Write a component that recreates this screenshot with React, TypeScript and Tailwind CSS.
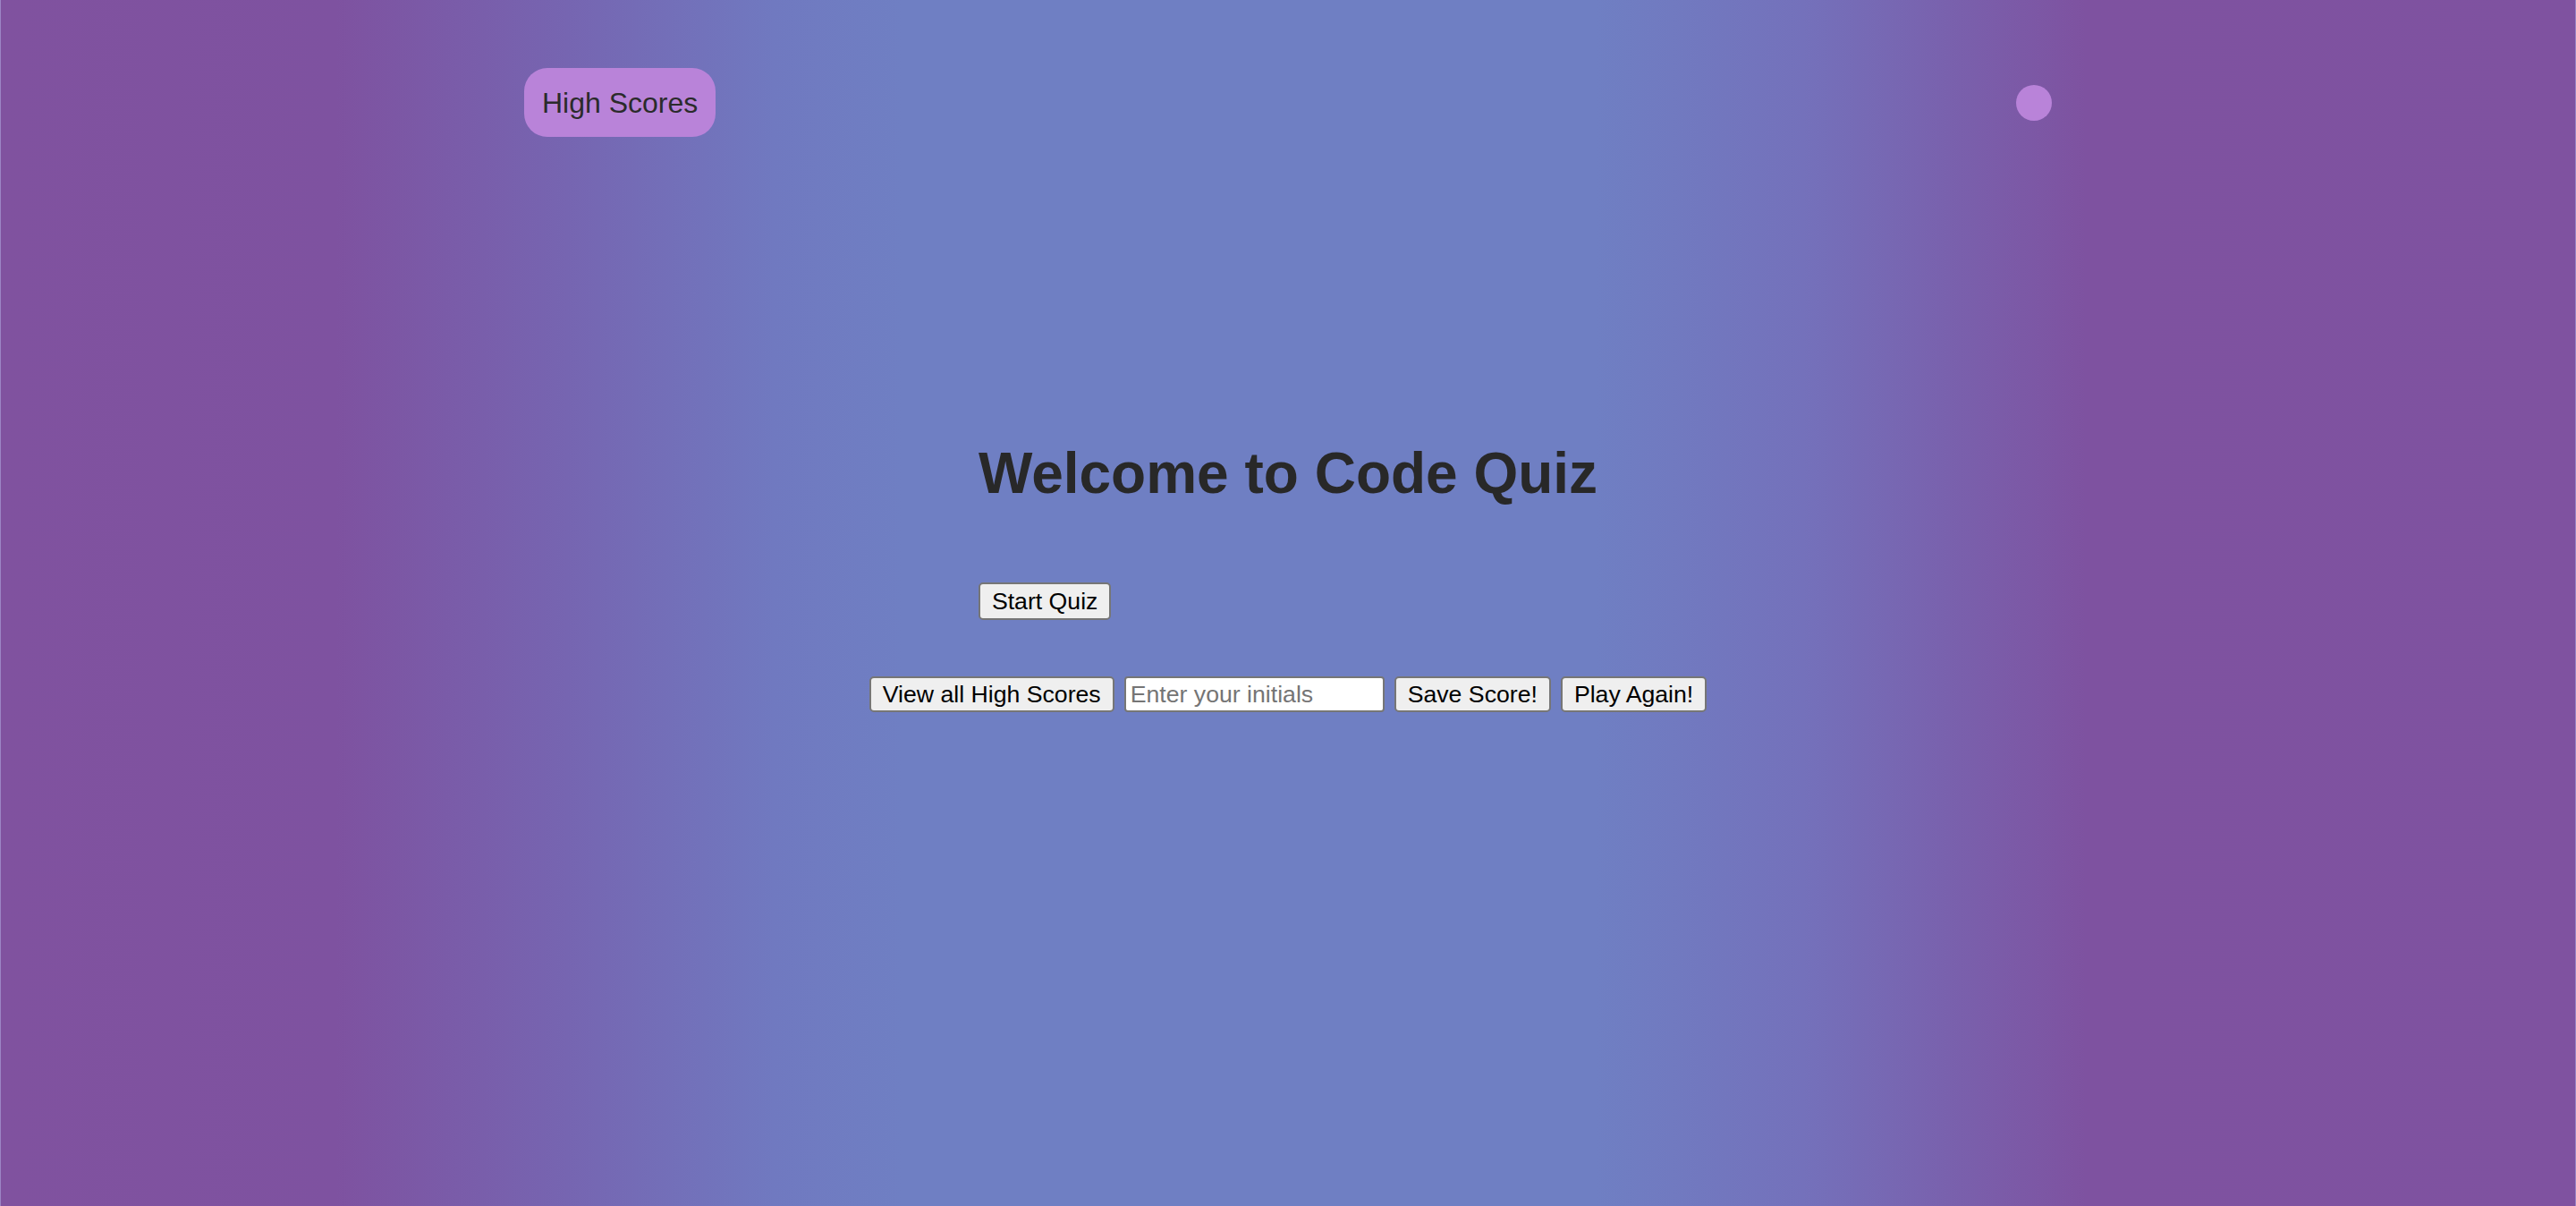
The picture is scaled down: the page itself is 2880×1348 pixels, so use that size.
import React from "react";

export default function App() {
  const btn =
    "h-[40px] px-[13px] border-2 border-[#767676] rounded-[5px] bg-[#efefef] text-black text-[26.67px] leading-none whitespace-nowrap";
  return (
    <div
      className="min-h-screen w-full border-x border-[#9b85c4] bg-[linear-gradient(90deg,#80529f_0%,#7e52a0_13%,#7665b1_22%,#7079c0_30%,#6f7fc3_35%,#6f7fc3_62%,#7471bb_70%,#7e52a0_81%,#7f52a0_100%)]"
      style={{ fontFamily: '"Liberation Sans", Arial, sans-serif' }}
    >
      <header className="w-[1708px] mx-auto pt-[76px] flex items-center justify-between">
        <button className="h-[77px] px-[20px] rounded-[26px] bg-[#b983d9] text-[#2b2b2b] text-[32px] leading-none">
          High Scores
        </button>
        <div className="w-[40px] h-[40px] rounded-full bg-[#b983d9]" />
      </header>

      <main className="mt-[340px] flex flex-col items-center">
        <div className="w-fit flex flex-col items-start">
          <h1 className="text-[64px] leading-[72px] font-bold text-[#282828]">
            Welcome to Code Quiz
          </h1>
          <button className={btn + " mt-[86px] h-[42px]"}>Start Quiz</button>
        </div>

        <div className="mt-[63px] flex items-center gap-[11px]">
          <button className={btn}>View all High Scores</button>
          <input
            type="text"
            placeholder="Enter your initials"
            className="w-[291px] h-[40px] border-2 border-[#767676] rounded-[4px] bg-white px-[5px] text-[26.67px] text-black placeholder:text-[#757575] outline-none"
          />
          <button className={btn}>Save Score!</button>
          <button className={btn}>Play Again!</button>
        </div>
      </main>
    </div>
  );
}
